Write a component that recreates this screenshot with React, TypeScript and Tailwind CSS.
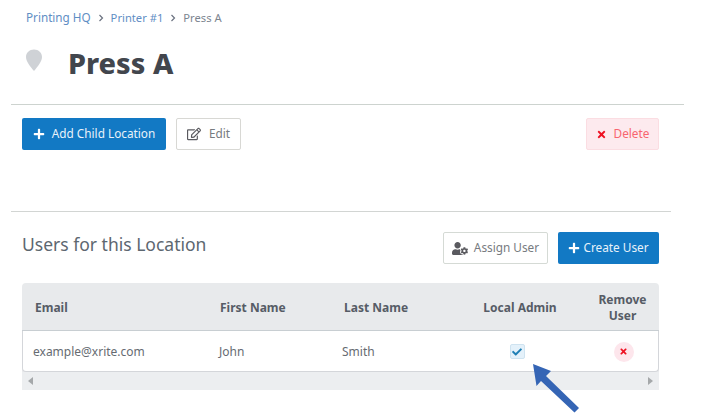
import { FaPlus, FaRegEdit, FaTimes, FaCheck, FaUserCog } from "react-icons/fa";

const font = "font-['Noto_Sans','Liberation_Sans',sans-serif]";
const cols = "grid-cols-[186px_124px_121px_134px_72px]";

function ChevronSep() {
  return (
    <svg className="mx-[6px] h-2 w-2 text-[#6b7280]" viewBox="0 0 8 8" fill="none" stroke="currentColor" strokeWidth={1.2}>
      <path d="M2.5 1l3 3-3 3" />
    </svg>
  );
}

function PinIcon() {
  return (
    <svg className="h-[22px] w-[18px] text-[#cfd2d6]" viewBox="0 0 18 22" fill="currentColor">
      <path d="M9 0.5c4.600 0 8 3.200 8 7.600 0 4.600-4.600 9.600-7.200 13.200-.4.5-1.200.5-1.600 0C5.600 17.700 1 12.700 1 8.100 1 3.700 4.400.5 9 .5z" />
    </svg>
  );
}

export default function App() {
  return (
    <div className={`relative h-[419px] w-[708px] overflow-hidden bg-white ${font}`}>
      {/* Breadcrumb */}
      <div className="flex h-[36px] items-center pl-[26px] text-[11.200px] text-[#5f8ec4]">
        <span className="text-[11.700px]">Printing HQ</span>
        <ChevronSep />
        <span>Printer #1</span>
        <ChevronSep />
        <span className="text-[#7c8590]">Press A</span>
      </div>

      {/* Title */}
      <div className="flex h-[56px] items-center pl-[25px]">
        <div className="-mt-[8px] w-[43px]">
          <PinIcon />
        </div>
        <h1 className="-mt-[2px] text-[28.800px] leading-none font-extrabold text-[#42464d]">Press A</h1>
      </div>

      <div className="mt-[12px] ml-[11px] h-px w-[673px] bg-[#cdd3cf]" />

      {/* Location actions */}
      <div className="mt-[13px] flex w-[659px] items-center pl-[22px]">
        <button className="flex h-[32px] w-[144px] items-center justify-center gap-[7px] rounded-[2px] bg-[#1279c4] text-[11.800px] text-[#e8f2fa]">
          <FaPlus className="h-[12px] w-[12px] text-white" />
          Add Child Location
        </button>
        <button className="ml-[10px] flex h-[32px] w-[65px] items-center justify-center gap-[8px] rounded-[2px] border border-[#d8d8d4] bg-white text-[11.800px] text-[#777b80]">
          <FaRegEdit className="h-[14px] w-[14px] text-[#5a5a5f]" />
          Edit
        </button>
        <button className="ml-auto flex h-[32px] w-[73px] items-center justify-center gap-[7px] rounded-[2px] border border-[#fbdde2] bg-[#fdeaee] text-[11.800px] text-[#f8656f]">
          <FaTimes className="h-[11px] w-[11px] text-[#ee1122]" />
          Delete
        </button>
      </div>

      <div className="mt-[61px] ml-[11px] h-px w-[660px] bg-[#d2d5d3]" />

      {/* Users header */}
      <div className="mt-[20px] flex h-[32px] w-[659px] items-center pl-[22px]">
        <h2 className="pb-[7px] text-[17.500px] text-[#5d6770]">Users for this Location</h2>
        <button className="ml-auto flex h-[32px] w-[105px] items-center justify-center gap-[6px] rounded-[2px] border border-[#d5dad5] bg-white text-[11.800px] text-[#777b80]">
          <FaUserCog className="h-[13px] w-[16px] text-[#5a5a5f]" />
          Assign User
        </button>
        <button className="ml-[10px] flex h-[32px] w-[101px] items-center justify-center gap-[3px] rounded-[2px] bg-[#1279c4] text-[11.800px] text-[#e8f2fa]">
          <FaPlus className="h-[12px] w-[12px] text-white" />
          Create User
        </button>
      </div>

      {/* Users table */}
      <div className="mt-[19px] ml-[22px] w-[637px] rounded-[4px] bg-[#e8eaec]">
        <div className={`grid h-[48px] ${cols} items-center border-b border-[#c8ced2] pt-[2px] text-[12px] font-bold text-[#565c66]`}>
          <div className="pl-[13px]">Email</div>
          <div className="pl-[12px]">First Name</div>
          <div className="pl-[12px]">Last Name</div>
          <div className="text-center">Local Admin</div>
          <div className="pr-[1px] text-center leading-[16px]">Remove User</div>
        </div>
        <div className={`grid h-[41px] ${cols} items-center rounded-b-[4px] border-r border-b border-l border-[#d4d6da] bg-white pt-[1px] text-[12px] text-[#666b72]`}>
          <div className="pl-[10px]">example@xrite.com</div>
          <div className="pl-[10px]">John</div>
          <div className="pl-[9px]">Smith</div>
          <div className="flex justify-center pr-[8px]">
            <span className="flex h-[15px] w-[15px] items-center justify-center rounded-[2px] border border-[#cfe3f0] bg-[#e4f1fa]">
              <FaCheck className="h-[10px] w-[10px] text-[#1f7fb5]" />
            </span>
          </div>
          <div className="flex justify-center pr-[1px]">
            <span className="flex h-[20px] w-[20px] items-center justify-center rounded-full bg-[#fde6ec]">
              <FaTimes className="h-[9px] w-[9px] text-[#ee1122]" />
            </span>
          </div>
        </div>
        <div className="flex h-[18px] items-center justify-between bg-[#eceef0] px-[6px]">
          <span className="h-0 w-0 border-y-[4px] border-r-[5px] border-y-transparent border-r-[#a5a8aa]" />
          <span className="h-0 w-0 border-y-[4px] border-l-[5px] border-y-transparent border-l-[#a5a8aa]" />
        </div>
      </div>

      {/* Annotation arrow */}
      <svg className="absolute top-[360px] left-[530px] h-[56px] w-[56px]" viewBox="0 0 56 56" fill="#3565b5">
        <path d="M3 4l18 7-5 5 33 32-4.500 4.500L11 21l-4.500 5z" />
      </svg>
    </div>
  );
}
